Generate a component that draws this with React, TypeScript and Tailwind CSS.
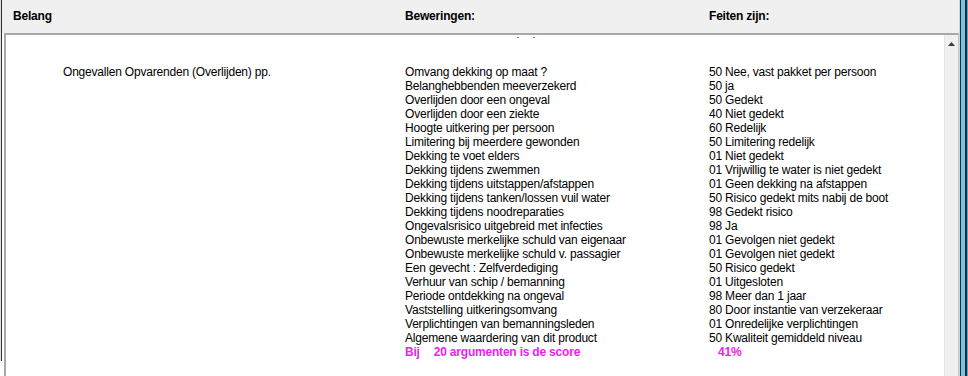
import React from 'react';

const rows: [string, string][] = [
  ['Omvang dekking op maat ?', '50 Nee, vast pakket per persoon'],
  ['Belanghebbenden meeverzekerd', '50 ja'],
  ['Overlijden door een ongeval', '50 Gedekt'],
  ['Overlijden door een ziekte', '40 Niet gedekt'],
  ['Hoogte uitkering per persoon', '60 Redelijk'],
  ['Limitering bij meerdere gewonden', '50 Limitering redelijk'],
  ['Dekking te voet elders', '01 Niet gedekt'],
  ['Dekking tijdens zwemmen', '01 Vrijwillig te water is niet gedekt'],
  ['Dekking tijdens uitstappen/afstappen', '01 Geen dekking na afstappen'],
  ['Dekking tijdens tanken/lossen vuil water', '50 Risico gedekt mits nabij de boot'],
  ['Dekking tijdens noodreparaties', '98 Gedekt risico'],
  ['Ongevalsrisico uitgebreid met infecties', '98 Ja'],
  ['Onbewuste merkelijke schuld van eigenaar', '01 Gevolgen niet gedekt'],
  ['Onbewuste merkelijke schuld v. passagier', '01 Gevolgen niet gedekt'],
  ['Een gevecht : Zelfverdediging', '50 Risico gedekt'],
  ['Verhuur van schip / bemanning', '01 Uitgesloten'],
  ['Periode ontdekking na ongeval', '98 Meer dan 1 jaar'],
  ['Vaststelling uitkeringsomvang', '80 Door instantie van verzekeraar'],
  ['Verplichtingen van bemanningsleden', '01 Onredelijke verplichtingen'],
  ['Algemene waardering van dit product', '50 Kwaliteit gemiddeld niveau'],
];

const App: React.FC = () => {
  return (
    <div className="flex h-[376px] w-[968px] overflow-hidden bg-white font-['Liberation_Sans',Arial,sans-serif] text-[12px] leading-[14px] tracking-[-0.2px] text-black">
      {/* left window edge */}
      <div className="h-[361px] w-px bg-[#e2e2e2]" />
      <div className="h-[361px] w-px bg-[#2e2e2e]" />

      <div className="flex w-[957px] flex-col">
        {/* column header */}
        <div className="flex h-[33px] items-center bg-[#f0f0f0] pb-px font-bold">
          <div className="w-[403px] pl-[11px]">Belang</div>
          <div className="w-[304px]">Beweringen:</div>
          <div>Feiten zijn:</div>
        </div>

        {/* list panel */}
        <div className="ml-[2px] flex flex-1 border-l-2 border-t-2 border-r border-[#a8a8a8] border-r-[#c8c8c8]">
          <div className="relative flex-1 pt-[30px]">
            <div className="absolute left-[511px] top-[2px] flex gap-[14px]">
              <span className="h-px w-[2px] bg-[#d050d0]" />
              <span className="h-px w-[2px] bg-[#d050d0]" />
            </div>
            <div className="flex">
              <div className="w-[399px] pl-[57px]">Ongevallen Opvarenden (Overlijden) pp.</div>
              <div>
                {rows.map(([claim, fact]) => (
                  <div key={claim} className="flex h-[14px]">
                    <div className="w-[304px]">{claim}</div>
                    <div>{fact}</div>
                  </div>
                ))}
                <div className="flex h-[14px] font-bold text-[#ee22ee]">
                  <div className="flex w-[313px] gap-[14px]">
                    <span>Bij</span>
                    <span>20 argumenten is de score</span>
                  </div>
                  <div>41%</div>
                </div>
              </div>
            </div>
          </div>

          {/* scrollbar */}
          <div className="flex w-[14px] flex-col items-center border-l border-[#e4e4e4] bg-[#f0f0f0] pt-[7px]">
            <svg width="7" height="4" viewBox="0 0 7 4">
              <path d="M3.5 0 L7 4 L0 4 Z" fill="#3a3a3a" />
            </svg>
          </div>
        </div>
      </div>

      {/* right window edge */}
      <div className="w-px bg-[#d4d4d4]" />
      <div className="w-px bg-[#1d2d3a]" />
      <div className="w-[4px] bg-[#74c4e6]" />
      <div className="w-[2px] bg-[#1d2d3a]" />
      <div className="w-px bg-[#5aa8cc]" />
    </div>
  );
};

export default App;
